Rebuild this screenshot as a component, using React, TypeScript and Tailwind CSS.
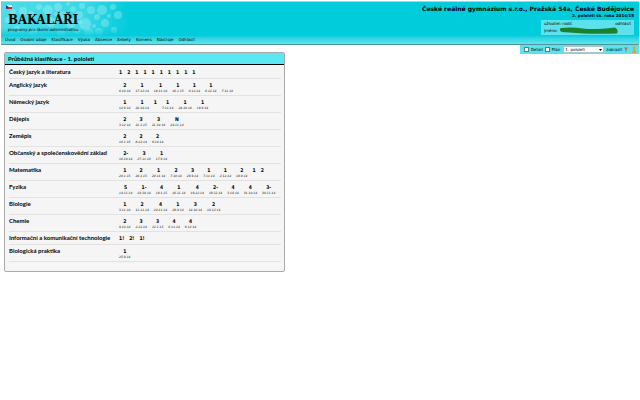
import { useState } from 'react'

type Mark = { value: string; date?: string }
type Subject = { name: string; marks: Mark[] }

// "value|date" pairs, a bare value is a mark without a date
const parse = (text: string): Mark[] =>
  text.split(',').map((item) => {
    const [value, date] = item.split('|')
    return { value: value.trim(), date }
  })

const subjects: Subject[] = [
  { name: 'Český jazyk a literatura', marks: parse('1,2,1,1,1,1,1,1,1,1') },
  {
    name: 'Anglický jazyk',
    marks: parse('2|6.10.14,1|17.12.14,1|18.11.14,1|16.1.15,1|6.12.14,1|6.12.14,|7.11.14'),
  },
  { name: 'Německý jazyk', marks: parse('1|12.9.14,1|20.10.14,1,1|7.11.14,1|24.10.14,1|19.9.14') },
  { name: 'Dějepis', marks: parse('2|3.12.14,3|21.1.15,3|21.10.14,N|24.11.14') },
  { name: 'Zeměpis', marks: parse('2|16.1.15,2|8.12.14,2|9.10.14') },
  { name: 'Občanský a společenskovědní základ', marks: parse('2-|16.10.14,3|27.11.14,1|17.9.14') },
  {
    name: 'Matematika',
    marks: parse('1|20.1.15,2|20.1.15,1|20.11.14,2|7.10.14,3|26.9.14,1|7.11.14,1|2.12.14,2|18.9.14,1,2'),
  },
  {
    name: 'Fyzika',
    marks: parse(
      '5|14.11.14,1-|10.10.14,4|19.1.15,1|16.11.14,4|19.12.14,2-|19.12.14,4|3.10.14,4|31.10.14,3-|30.11.14',
    ),
  },
  { name: 'Biologie', marks: parse('1|3.11.14,2|11.11.14,4|24.11.14,1|29.9.14,3|14.10.14,2|16.12.14') },
  { name: 'Chemie', marks: parse('2|9.10.14,3|2.12.14,3|12.1.15,4|6.11.14,4|9.12.14') },
  { name: 'Informační a komunikační technologie', marks: parse('1!,2!,1!') },
  { name: 'Biologická praktika', marks: parse('1|25.9.14') },
]

const menu = ['Úvod', 'Osobní údaje', 'Klasifikace', 'Výuka', 'Absence', 'Ankety', 'Komens', 'Nástroje', 'Odhlásit']

const bubbles = [
  [22, 9, 4], [38, 5, 3], [47, 8, 5], [57, 5, 4], [62, 14, 5], [72, 7, 3], [78, 13, 4], [70, 21, 5],
  [84, 22, 6], [90, 8, 4], [96, 15, 3], [101, 8, 5], [104, 21, 4], [88, 31, 5], [76, 29, 3], [98, 30, 4],
  [112, 5, 3], [117, 13, 4], [32, 31, 4], [50, 20, 5], [16, 27, 3], [60, 31, 4], [113, 28, 3], [7, 18, 3],
  [81, 4, 3], [55, 12, 2], [67, 2, 2], [93, 24, 2], [108, 14, 2], [30, 12, 3], [12, 10, 3], [79, 20, 2],
]

function Header() {
  return (
    <header className="relative border-y border-t-[#c9c9c9] border-b-[#4f9297] bg-linear-to-b from-[#00ccdc] from-80% to-[#5ce6ef]">
      <svg className="absolute top-0 left-0 h-[36px] w-[130px]" viewBox="0 0 130 36" aria-hidden="true">
        <defs>
          <linearGradient id="glow">
            <stop offset="0" stopColor="#6fe3ec" stopOpacity="0.7" />
            <stop offset="0.65" stopColor="#6fe3ec" stopOpacity="0.5" />
            <stop offset="1" stopColor="#6fe3ec" stopOpacity="0" />
          </linearGradient>
          <linearGradient id="fade" x2="0" y2="1">
            <stop offset="0.7" stopColor="#fff" />
            <stop offset="1" stopColor="#000" />
          </linearGradient>
          <mask id="edge">
            <rect width="130" height="36" fill="url(#fade)" />
          </mask>
        </defs>
        <g mask="url(#edge)">
          <rect width="130" height="36" fill="url(#glow)" />
          {bubbles.map(([x, y, r]) => (
            <circle key={`${x}-${y}`} cx={x} cy={y} r={r} fill="#b8f2f6" fillOpacity="0.35" />
          ))}
        </g>
      </svg>
      <div className="relative flex h-[33px] justify-between pr-[5px] pl-[7px]">
        <div className="pt-[3px]">
          <svg className="-ml-[2px] h-[4px] w-[6px]" viewBox="0 0 6 4" role="img" aria-label="Čeština">
            <rect width="6" height="2" fill="#fff" />
            <rect y="2" width="6" height="2" fill="#d81e28" />
            <path d="M0 0 3 2 0 4Z" fill="#1d3f94" />
          </svg>
          <div className="pt-[4px] font-['DejaVu_Serif_Condensed','DejaVu_Serif',serif] text-[13px] leading-[14px] font-bold">
            BAKALÁŘI
          </div>
          <div className="text-[4px] leading-[5px] text-black italic">programy pro školní administrativu</div>
        </div>
        <div className="flex flex-col items-end pt-[2px]">
          <h1 className="text-[6px] leading-[9px] font-bold">
            České reálné gymnázium s.r.o., Pražská 54a, České Budějovice
          </h1>
          <p className="text-[4px] leading-[5px] font-bold">2. pololetí šk. roku 2014/15</p>
          <div className="mt-[2px] w-[93px] bg-[#5be2ec] px-[3px] py-px text-[4px] leading-[6px]">
            <div className="flex justify-between">
              <span>uživatel: rodič</span>
              <a href="#logout">odhlásit</a>
            </div>
            <div className="flex items-center gap-px">
              <span>jméno:</span>
              <svg className="h-[7px] w-[60px]" viewBox="0 0 60 7" aria-hidden="true">
                <path d="M2 1Q14 0 24 1.500T56 .5Q60 3 58 6.500Q40 7 24 6.500L3 5Q-1 3 2 1Z" fill="#1b812d" />
              </svg>
            </div>
          </div>
        </div>
      </div>
      <nav className="relative flex gap-[5px] pt-[2px] pb-px pl-[4px] text-[4px] leading-[6px]">
        {menu.map((item) => (
          <a key={item} href="#menu">
            {item}
          </a>
        ))}
      </nav>
    </header>
  )
}

function Toolbar() {
  const [detail, setDetail] = useState(false)
  const [plan, setPlan] = useState(false)
  const box = 'size-[5px] appearance-none border border-[#5b7f83] bg-white checked:bg-[#1b812d]'

  return (
    <form className="ml-auto flex h-[9px] w-[119px] items-center bg-[#5be2ec] pl-[4px] text-[4px] leading-[6px]">
      <label className="flex items-center gap-[2px]">
        <input type="checkbox" className={box} checked={detail} onChange={(e) => setDetail(e.target.checked)} />
        Detail
      </label>
      <label className="ml-[2px] flex items-center gap-[2px]">
        <input type="checkbox" className={box} checked={plan} onChange={(e) => setPlan(e.target.checked)} />
        Plán
      </label>
      <div className="relative ml-[3px]">
        <select
          aria-label="Období"
          className="block h-[7px] w-[41px] appearance-none border border-[#a5c9cc] bg-white pl-px text-[4px] leading-[5px]"
        >
          <option>1. pololetí</option>
          <option>2. pololetí</option>
        </select>
        <svg className="pointer-events-none absolute top-[3px] right-[2px] h-[2px] w-[3px]" viewBox="0 0 3 2" aria-hidden="true">
          <path d="M0 0H3L1.5 2Z" />
        </svg>
      </div>
      <button type="button" className="ml-[2px]">
        zobrazit
      </button>
      <svg className="ml-[2px] h-[5px] w-[4px] shrink-0" viewBox="0 0 4 5" aria-hidden="true">
        <path d="M0 .5H4L2.5 3V5H1.5V3Z" fill="#b8706c" />
      </svg>
      <svg className="ml-[4px] h-[7px] w-[4px] shrink-0" viewBox="0 0 4 7" aria-hidden="true">
        <path d="M1 0H3V5H4V7H0V5H1Z" fill="#d9a34b" />
      </svg>
    </form>
  )
}

function Marks({ marks }: { marks: Mark[] }) {
  return (
    <div className="flex gap-[5px]">
      {marks.map((mark, i) => (
        <div key={i} className="text-center whitespace-nowrap">
          <div className="h-[6px] font-['DejaVu_Sans_Condensed','DejaVu_Sans',sans-serif] text-[5px] leading-[6px] font-bold">
            {mark.value}
          </div>
          {mark.date ? <div className="pt-px text-[3px] leading-[4px] text-black italic">{mark.date}</div> : null}
        </div>
      ))}
    </div>
  )
}

export default function App() {
  return (
    <div className="min-h-screen bg-white px-px pt-px font-['DejaVu_Sans',sans-serif] text-black">
      <Header />
      <Toolbar />
      <main className="mr-[354px] ml-[3px] -mt-[2px] overflow-hidden rounded-[2px] border border-[#a9a9a9] bg-[#f5f5f5]">
        <h2 className="border-b border-black bg-[#5be8f2] px-[3px] font-['Lato',sans-serif] text-[6px] leading-[11px] font-bold">
          Průběžná klasifikace - 1. pololetí
        </h2>
        <table className="mx-[4px] mt-px mb-[9px] w-[272px] table-fixed">
          <tbody>
            {subjects.map((subject) => (
              <tr key={subject.name} className="border-b border-[#e2e2e2] align-top">
                <th
                  scope="row"
                  className="w-[110px] pt-[3px] pb-[3px] text-left font-['Lato',sans-serif] text-[6px] leading-[6px] font-bold whitespace-nowrap"
                >
                  {subject.name}
                </th>
                <td className="pt-[3px] pb-[2px]">
                  <Marks marks={subject.marks} />
                </td>
              </tr>
            ))}
          </tbody>
        </table>
      </main>
    </div>
  )
}
